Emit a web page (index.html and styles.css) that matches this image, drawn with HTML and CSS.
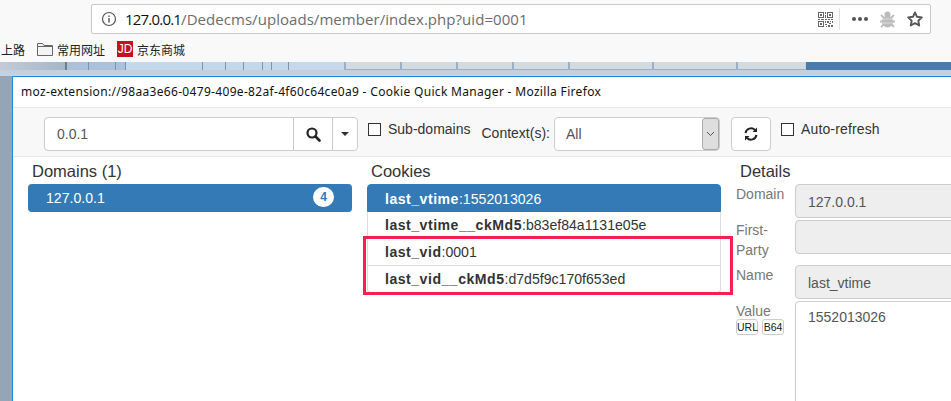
FILE: index.html
```html
<!DOCTYPE html>
<html lang="en">
<head>
    <meta charset="UTF-8">
    <meta name="viewport" content="width=device-width, initial-scale=1.0">
    <title>Cookie Quick Manager</title>
    <link rel="stylesheet" href="styles.css">
</head>
<body>
    <!-- Browser chrome behind the popup -->
    <div class="browser-bar">
        <div class="url-bar">
            <svg class="info-icon" width="16" height="16" viewBox="0 0 16 16"><circle cx="8" cy="8" r="6.500" fill="none" stroke="#555" stroke-width="1.200"/><rect x="7.300" y="7" width="1.400" height="4.500" fill="#555"/><rect x="7.300" y="4.500" width="1.400" height="1.500" fill="#555"/></svg>
            <span class="url-text"><span class="url-host">127.0.0.1</span>/Dedecms/uploads/member/index.php?uid=0001</span>
            <svg class="qr-icon" width="15" height="15" viewBox="0 0 15 15" fill="#666"><path fill-rule="evenodd" d="M0 0h6v6H0zM1 1v4h4V1zM2 2h2v2H2zM9 0h6v6H9zM10 1v4h4V1zM11 2h2v2h-2zM0 9h6v6H0zM1 10v4h4v-4zM2 11h2v2H2zM7 0h1v2H7zM7 3h1v3H7zM0 7h2v1H0zM3 7h3v1H3zM7 7h2v1H7zM10 7h2v1h-2zM13 7h2v1h-2zM9 9h2v2H9zM12 9h1v1h-1zM14 9h1v2h-1zM7 9h1v2H7zM11 11h2v1h-2zM7 12h2v1H7zM10 13h2v2h-2zM13 13h2v2h-2zM8 14h1v1H8z"/></svg>
            <span class="url-sep"></span>
            <span class="dots"><i></i><i></i><i></i></span>
            <svg class="bug-icon" width="15" height="17" viewBox="0 0 15 17" fill="#bcbcbc"><ellipse cx="7.500" cy="10.500" rx="5.500" ry="6"/><circle cx="7.500" cy="3.500" r="3"/><path d="M1 4l3 3M14 4l-3 3M0 10.500h3M15 10.500h-3M1 16l3-3M14 16l-3-3" stroke="#bcbcbc" stroke-width="1.800"/><path d="M3 8h9M3 12h9" stroke="#dcdcdc" stroke-width="1"/></svg>
            <svg class="star-icon" width="16" height="16" viewBox="0 0 16 16"><path d="M8 1.400l2 4.400 4.800.6-3.500 3.300.9 4.800L8 12.200l-4.200 2.300.9-4.800L1.200 6.400 6 5.800z" fill="none" stroke="#555" stroke-width="1.900" stroke-linejoin="round"/></svg>
        </div>
        <div class="bookmarks">
            <span class="bookmark first">上路</span>
            <span class="bookmark">
                <svg width="16" height="14" viewBox="0 0 16 14"><path d="M.5 13.500V1.500h5l1.500 2h8.500v10z" fill="#f4f4f4" stroke="#666"/><path d="M.5 4.500h15" stroke="#666"/></svg>
                常用网址
            </span>
            <span class="bookmark">
                <span class="jd-logo">JD</span>
                京东商城
            </span>
        </div>
    </div>

    <div class="desktop-strip">
        <span class="seg seg-gray"></span>
        <span class="seg seg-blue"></span>
        <span class="seg seg-blue"></span>
        <span class="seg seg-blue"></span>
        <span class="seg seg-pale"></span>
        <span class="seg seg-pale"></span>
        <span class="seg seg-pale"></span>
        <span class="seg seg-pale"></span>
        <span class="seg seg-pale"></span>
        <span class="seg seg-pale"></span>
        <span class="seg-open"></span>
        <span class="seg-box"></span>
        <span class="seg-box"></span>
        <span class="seg-box"></span>
        <span class="seg-box"></span>
        <span class="seg-box"></span>
        <span class="seg-box"></span>
        <span class="seg-box seg-box-last"></span>
        <span class="seg-dark"></span>
    </div>

    <div class="desktop">
        <div class="popup">
            <div class="popup-title">moz-extension://98aa3e66-0479-409e-82af-4f60c64ce0a9 - Cookie Quick Manager - Mozilla Firefox</div>

            <div class="toolbar">
                <div class="search-group">
                    <span class="search-input">0.0.1</span>
                    <span class="search-btn">
                        <svg width="15" height="15" viewBox="0 0 15 15"><circle cx="6" cy="6" r="4.500" fill="none" stroke="#222" stroke-width="2.200"/><path d="M9.500 9.500l4 4" stroke="#222" stroke-width="2.600" stroke-linecap="round"/></svg>
                    </span>
                    <span class="caret-btn"><span class="caret"></span></span>
                </div>
                <label class="check check-sub"><span class="box"></span>Sub-domains</label>
                <span class="context-label">Context(s):</span>
                <div class="context-select">
                    <span class="context-value">All</span>
                    <span class="select-arrow">
                        <svg width="9" height="6" viewBox="0 0 9 6"><path d="M1 1l3.500 3.500L8 1" fill="none" stroke="#555" stroke-width="1"/></svg>
                    </span>
                </div>
                <span class="refresh-btn">
                    <svg width="14" height="14" viewBox="0 0 14 14" fill="none" stroke="#222" stroke-width="2"><path d="M1.500 6A5.600 5.600 0 0 1 11 3"/><path d="M12.500 8A5.600 5.600 0 0 1 3 11"/><path d="M13 .5v4.500H8.500z" fill="#222" stroke="none"/><path d="M1 13.500V9h4.500z" fill="#222" stroke="none"/></svg>
                </span>
                <label class="check check-auto"><span class="box"></span>Auto-refresh</label>
            </div>

            <div class="panels">
                <section class="domains">
                    <h4>Domains (1)</h4>
                    <div class="list-row active">
                        127.0.0.1
                        <span class="badge">4</span>
                    </div>
                </section>

                <section class="cookies">
                    <h4>Cookies</h4>
                    <div class="cookie-list">
                        <div class="list-row active"><strong>last_vtime</strong>:1552013026</div>
                        <div class="list-row"><strong>last_vtime__ckMd5</strong>:b83ef84a1131e05e</div>
                        <div class="list-row"><strong>last_vid</strong>:0001</div>
                        <div class="list-row"><strong>last_vid__ckMd5</strong>:d7d5f9c170f653ed</div>
                    </div>
                    <div class="highlight"></div>
                </section>

                <section class="details">
                    <h4>Details</h4>
                    <div class="detail-grid">
                        <label class="detail-label">Domain</label>
                        <div class="field">127.0.0.1</div>
                        <label class="detail-label">First-Party</label>
                        <div class="field"></div>
                        <label class="detail-label label-name">Name</label>
                        <div class="field field-name">last_vtime</div>
                        <div class="detail-label">
                            Value
                            <div class="mini-btns"><span>URL</span><span>B64</span></div>
                        </div>
                        <div class="field field-value">1552013026</div>
                    </div>
                </section>
            </div>
        </div>
    </div>
</body>
</html>
```

FILE: styles.css
```css
html, body { margin: 0; height: 401px; overflow: hidden; }
body { font-family: "Liberation Sans", Arial, sans-serif; font-size: 14px; color: #333; background: #fff; }
h4 { margin: 0 0 4px; font-size: 16.5px; font-weight: 400; line-height: 17px; }

/* Browser chrome */
.browser-bar { height: 62px; background: #f9f9f9; padding-top: 4px; box-sizing: border-box; }
.url-bar {
    display: flex; align-items: center;
    width: 840px; height: 30px; margin-left: 91px;
    box-sizing: border-box; padding-left: 9px;
    background: #fff; border: 1px solid #c8c8c8; border-radius: 2px;
}
.url-text { margin-left: 8px; font-family: "Open Sans", sans-serif; font-size: 15px; letter-spacing: 0.05px; color: #6c6c6c; flex: 1; white-space: nowrap; }
.url-host { color: #111; letter-spacing: -0.8px; }
.qr-icon { margin-right: 6px; }
.url-sep { width: 1px; height: 22px; background: #e2e2e2; margin-right: 12px; }
.dots { display: flex; gap: 2px; margin-right: 12px; }
.dots i { width: 4px; height: 4px; border-radius: 50%; background: #555; }
.bug-icon { margin-right: 12px; }
.star-icon { margin-right: 7px; }

.bookmarks { display: flex; align-items: center; height: 24px; margin-top: 3px; font-family: "Noto Sans CJK SC", sans-serif; font-size: 12px; color: #222; }
.bookmark { display: flex; align-items: center; gap: 4px; margin-right: 12px; }
.bookmark.first { margin-left: 1px; }
.jd-logo {
    width: 16px; height: 16px; background: #c6121f; color: #fff;
    font-family: "Liberation Sans", sans-serif; font-size: 12px; line-height: 16px; text-align: center;
}

/* Desktop behind the popup */
.desktop-strip {
    display: grid; height: 14px;
    grid-template-columns: 67px 22px 27px 10px 77px 23px 18px 19px 9px 17px 55px 56px 56px 56px 56px 84px 84px 70px 1fr;
    grid-template-rows: 8px;
    background: linear-gradient(#bccadb, #c6d3df);
}
.seg { box-sizing: border-box; border-right: 1px solid #7f93a8; }
.seg-gray { background: linear-gradient(90deg, #c2ccd6, #a5b6c8); border-right: 2px solid #6d7d8e; }
.seg-blue { background: #a9c1da; }
.seg-pale { background: #c4d8ec; }
.seg-open { background: #c6d8ea; }
.seg-box { box-sizing: border-box; background: #d3dae0; border-left: 2px solid #9db0c2; border-bottom: 1px solid #9db0c2; }
.seg-box-last { border-right: 1px solid #c8d0d8; }
.seg-dark { background: #4a7bac; }

.desktop { height: 325px; padding-left: 12px; background: linear-gradient(90deg, #94a5b6, #a8b5c2); }
.popup { height: 325px; overflow: hidden; background: #fff; border-top: 1px solid #1e88e0; border-left: 1px solid #1e88e0; }
.popup-title { height: 30px; line-height: 29px; padding-left: 8px; font-family: "Noto Sans", sans-serif; font-size: 12px; letter-spacing: 0.32px; color: #111; white-space: nowrap; }

/* Toolbar */
.toolbar {
    display: flex; align-items: flex-start;
    height: 50px; box-sizing: border-box; padding: 9px 0 0 31px;
    background: #f8f8f8; border-top: 1px solid #e7e7e7; border-bottom: 1px solid #e7e7e7;
}
.search-group { display: flex; width: 314px; height: 34px; box-sizing: border-box; background: #fff; border: 1px solid #ccc; border-radius: 4px; }
.search-input { flex: 1; padding-left: 12px; line-height: 32px; color: #555; }
.search-btn { display: flex; align-items: center; justify-content: center; width: 39px; box-sizing: border-box; border-left: 1px solid #ccc; }
.caret-btn { display: flex; align-items: center; justify-content: center; width: 25px; box-sizing: border-box; border-left: 1px solid #ccc; }
.caret { width: 0; height: 0; border-top: 4px solid #333; border-left: 4px solid transparent; border-right: 4px solid transparent; }

.check { display: flex; align-items: center; height: 16px; margin-top: 4px; }
.box { width: 11px; height: 11px; margin-right: 7px; background: #fff; border: 1px solid #333; }
.check-sub { margin-left: 10px; }
.context-label { margin: 8px 4px 0 11px; }
.context-select { display: flex; width: 166px; height: 34px; box-sizing: border-box; background: #fff; border: 1px solid #ccc; border-radius: 4px; }
.context-value { flex: 1; padding-left: 11px; line-height: 33px; color: #555; }
.select-arrow { display: flex; align-items: center; justify-content: center; width: 17px; box-sizing: border-box; background: #dedede; border: 1px solid #aaa; border-radius: 3px; }
.refresh-btn { display: flex; align-items: center; justify-content: center; width: 40px; height: 34px; margin-left: 11px; box-sizing: border-box; background: #fff; border: 1px solid #ccc; border-radius: 4px; }
.check-auto { margin-left: 10px; letter-spacing: 0.15px; }

/* Panels */
.panels { display: flex; padding: 6px 0 0 15px; }
.domains { width: 324px; margin-right: 15px; flex: none; }
.domains h4 { padding-left: 4px; }
.cookies { position: relative; width: 354px; margin-right: 15px; flex: none; }
.cookies h4 { padding-left: 4px; }
.details { width: 215px; flex: none; }
.details h4 { padding-left: 4px; }

.list-row { position: relative; height: 27px; box-sizing: border-box; padding-left: 17px; font-size: 14.1px; line-height: 27px; background: #fff; border: 1px solid #ddd; border-top-width: 0; white-space: nowrap; }
.list-row strong { letter-spacing: 0.5px; }
.list-row:first-child { border-top-width: 1px; }
.list-row.active { background: #337ab7; border-color: #337ab7; color: #fff; border-radius: 4px 4px 0 0; height: 28px; line-height: 28px; }
.domains .list-row.active { border-radius: 4px; }
.cookie-list .list-row:last-child { border-radius: 0 0 4px 4px; }
.badge {
    position: absolute; top: 3px; right: 17px;
    width: 21px; height: 20px; line-height: 20px; border-radius: 10px;
    background: #fff; color: #337ab7; font-size: 12px; font-weight: 700; text-align: center;
}
.highlight { position: absolute; left: -4px; top: 73px; width: 364px; height: 53px; border: 3px solid #f5204f; pointer-events: none; }

/* Details */
.detail-grid { display: grid; grid-template-columns: 59px 200px; row-gap: 2px; }
.detail-label { color: #777; line-height: 20px; }
.label-name { padding-top: 3px; }
.field { height: 34px; box-sizing: border-box; padding-left: 12px; line-height: 34px; color: #555; background: #eee; border: 1px solid #ccc; border-radius: 4px; }
.field-name { margin-top: 3px; }
.field-value { height: 200px; padding-top: 5px; line-height: 20px; background: #fff; }
.mini-btns { display: flex; gap: 4px; margin-top: -2px; }
.mini-btns span { box-sizing: border-box; width: 22px; height: 16px; font-size: 10.5px; line-height: 14px; text-align: center; color: #222; background: #fff; border: 1px solid #ccc; border-radius: 3px; }
```
